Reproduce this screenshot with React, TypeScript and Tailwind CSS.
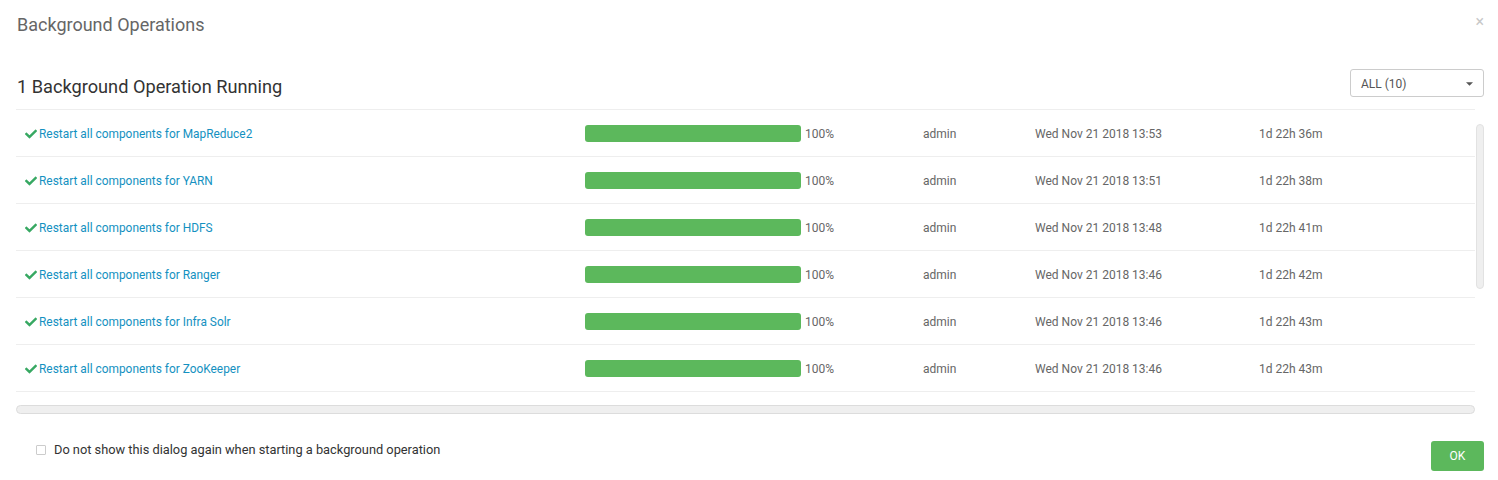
import React from "react";

const ops = [
  { name: "MapReduce2", date: "Wed Nov 21 2018 13:53", dur: "1d 22h 36m" },
  { name: "YARN", date: "Wed Nov 21 2018 13:51", dur: "1d 22h 38m" },
  { name: "HDFS", date: "Wed Nov 21 2018 13:48", dur: "1d 22h 41m" },
  { name: "Ranger", date: "Wed Nov 21 2018 13:46", dur: "1d 22h 42m" },
  { name: "Infra Solr", date: "Wed Nov 21 2018 13:46", dur: "1d 22h 43m" },
  { name: "ZooKeeper", date: "Wed Nov 21 2018 13:46", dur: "1d 22h 43m" },
];

const Check = () => (
  <svg viewBox="0 0 512 512" className="w-[12px] h-[12px] mr-[2px] fill-[#37a862]">
    <path d="M173.9 439.4l-166.4-166.4c-10-10-10-26.2 0-36.2l36.2-36.2c10-10 26.2-10 36.2 0L192 312.7 432.1 72.6c10-10 26.2-10 36.2 0l36.2 36.2c10 10 10 26.2 0 36.2l-294.4 294.4c-10 10-26.2 10-36.2 0z" />
  </svg>
);

export default function App() {
  return (
    <div className="w-[1498px] h-[480px] bg-white text-[#333] font-['Roboto',sans-serif] relative">
      <div className="flex items-start justify-between pl-[17px] pr-[14px] pt-[14px]">
        <h4 className="text-[18px] leading-[22px] text-[#666]">Background Operations</h4>
        <span className="text-[16px] leading-[16px] text-[#c8c8c8]">×</span>
      </div>

      <div className="flex items-end justify-between pl-[17px] pr-[14px] mt-[33px]">
        <div className="text-[18.2px] leading-[22px] text-[#333] mb-[-1px]">1 Background Operation Running</div>
        <div className="w-[134px] h-[28px] border border-[#ccc] rounded-[3px] flex items-center justify-between pl-[10px] pr-[10px] pt-[1px] text-[12px] text-[#555]">
          <span>ALL (10)</span>
          <svg viewBox="0 0 8 4" className="w-[7px] h-[4px] fill-[#555]">
            <path d="M0 0h8L4 4z" />
          </svg>
        </div>
      </div>

      <div className="ml-[16px] w-[1459px] border-b border-[#eee] mt-[12px]" />

      <div className="flex">
        <div className="ml-[16px] w-[1459px]">
          {ops.map((o) => (
            <div key={o.name} className="h-[47px] border-b border-[#eee] flex items-center text-[12px] leading-[16px]">
              <div className="w-[569px] pl-[9px] pt-[2px] flex items-center text-[#1491c1]">
                <Check />
                <span className="text-[11.9px]">Restart all components for {o.name}</span>
              </div>
              <div className="w-[338px] flex items-center">
                <div className="w-[216px] h-[17px] rounded-[3px] bg-[#5cb85c]" />
                <span className="ml-[4px] pt-[2px] text-[#666]">100%</span>
              </div>
              <div className="w-[112px] pt-[2px] text-[#666]">admin</div>
              <div className="w-[224px] pt-[2px] text-[#666]">{o.date}</div>
              <div className="flex-1 pt-[2px] text-[#666]">{o.dur}</div>
            </div>
          ))}
        </div>
        <div className="ml-[1px] mt-[14px] w-[8px] h-[165px] rounded-full bg-[#efefef] border border-[#e2e2e2]" />
      </div>

      <div className="ml-[16px] w-[1459px] h-[9px] mt-[13px] rounded-full bg-[#efefef] border border-[#dcdcdc]" />

      <div className="flex items-start justify-between pl-[36px] pr-[14px] mt-[27px]">
        <div className="flex items-center mt-[1px] h-[16px]">
          <div className="w-[10px] h-[10px] border border-[#ccc] rounded-[1px]" />
          <span className="ml-[8px] text-[12.8px] text-[#333]">Do not show this dialog again when starting a background operation</span>
        </div>
        <button className="w-[53px] h-[30px] rounded-[3px] bg-[#5cb85c] text-white text-[12px]">OK</button>
      </div>
    </div>
  );
}
